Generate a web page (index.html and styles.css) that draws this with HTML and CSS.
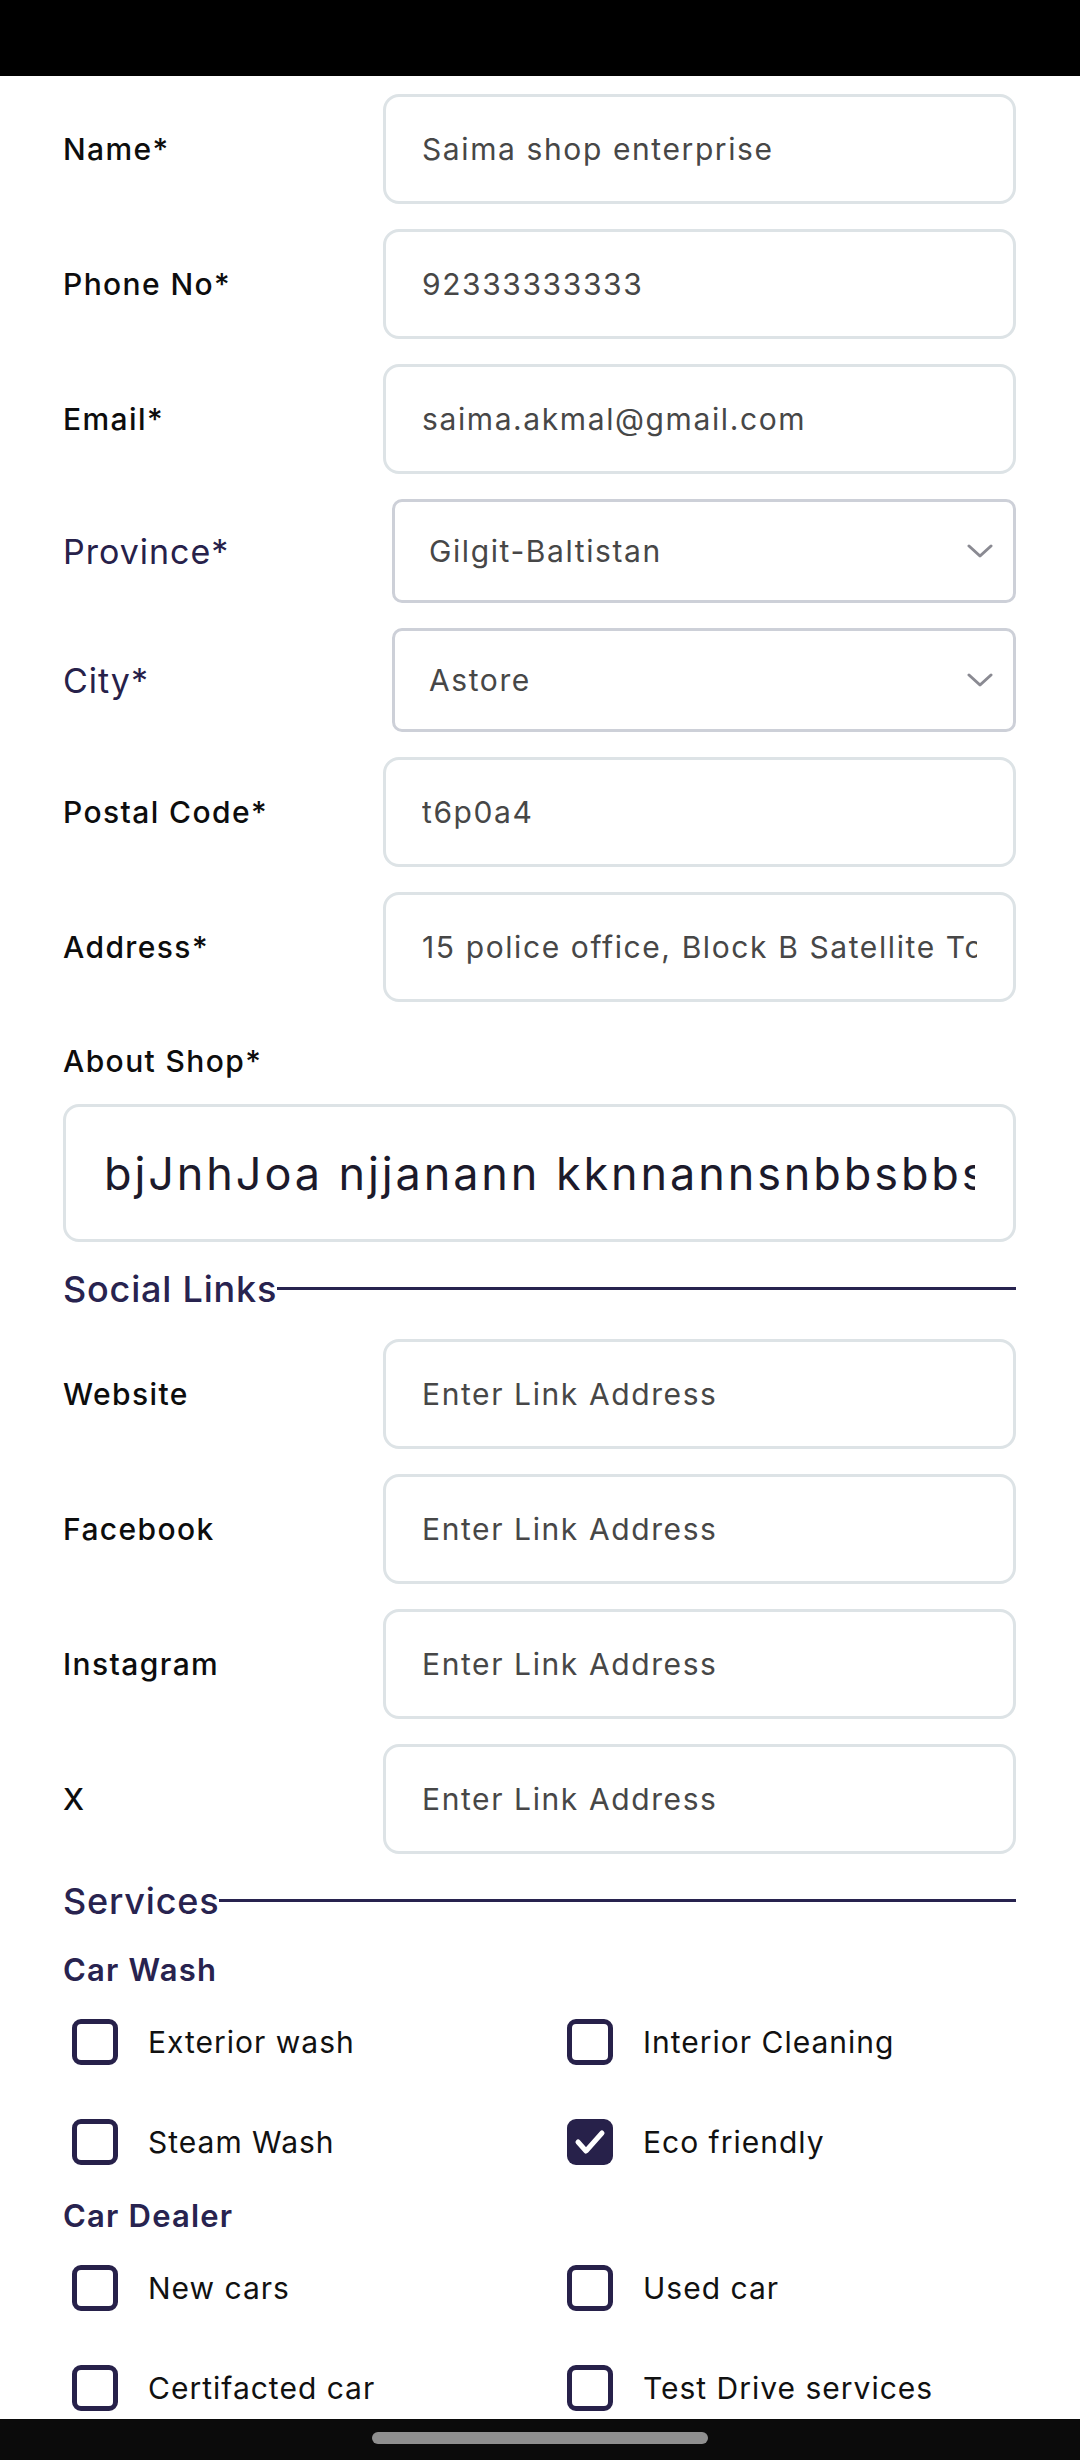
FILE: index.html
```html
<!DOCTYPE html>
<html lang="en">
<head>
<meta charset="utf-8">
<title>Shop Form</title>
<link rel="stylesheet" href="styles.css">
</head>
<body>
<div class="statusbar"></div>
<main class="form">
  <div class="row">
    <label class="label">Name*</label>
    <div class="field"><span class="value">Saima shop enterprise</span></div>
  </div>
  <div class="row">
    <label class="label">Phone No*</label>
    <div class="field"><span class="value">92333333333</span></div>
  </div>
  <div class="row">
    <label class="label">Email*</label>
    <div class="field"><span class="value">saima.akmal@gmail.com</span></div>
  </div>
  <div class="row row-select">
    <label class="label label-accent">Province*</label>
    <div class="select"><span class="value">Gilgit-Baltistan</span>
      <svg class="chev" viewBox="0 0 26 14" width="26" height="14"><path d="M2 2 L13 12 L24 2" fill="none" stroke="#8a8a92" stroke-width="3" stroke-linecap="round" stroke-linejoin="round"/></svg>
    </div>
  </div>
  <div class="row row-select">
    <label class="label label-accent">City*</label>
    <div class="select"><span class="value">Astore</span>
      <svg class="chev" viewBox="0 0 26 14" width="26" height="14"><path d="M2 2 L13 12 L24 2" fill="none" stroke="#8a8a92" stroke-width="3" stroke-linecap="round" stroke-linejoin="round"/></svg>
    </div>
  </div>
  <div class="row">
    <label class="label">Postal Code*</label>
    <div class="field"><span class="value">t6p0a4</span></div>
  </div>
  <div class="row">
    <label class="label">Address*</label>
    <div class="field"><span class="value">15 police office, Block B Satellite Town</span></div>
  </div>

  <div class="about">
    <label class="label">About Shop*</label>
    <div class="textarea"><span class="value big">bjJnhJoa njjanann kknnannsnbbsbbsnnsn</span></div>
  </div>

  <h2 class="section">Social Links<span class="rule"></span></h2>
  <div class="links">
    <div class="row">
      <label class="label">Website</label>
      <div class="field"><span class="value">Enter Link Address</span></div>
    </div>
    <div class="row">
      <label class="label">Facebook</label>
      <div class="field"><span class="value">Enter Link Address</span></div>
    </div>
    <div class="row">
      <label class="label">Instagram</label>
      <div class="field"><span class="value">Enter Link Address</span></div>
    </div>
    <div class="row">
      <label class="label">X</label>
      <div class="field"><span class="value">Enter Link Address</span></div>
    </div>
  </div>

  <h2 class="section section-services">Services<span class="rule"></span></h2>
  <h3 class="group">Car Wash</h3>
  <div class="checks">
    <div class="check"><span class="box"></span><span class="ctext">Exterior wash</span></div>
    <div class="check"><span class="box"></span><span class="ctext">Interior Cleaning</span></div>
    <div class="check"><span class="box"></span><span class="ctext">Steam Wash</span></div>
    <div class="check"><span class="box checked"><svg viewBox="0 0 46 46" width="46" height="46"><path d="M11 23 L19 32 L35 14" fill="none" stroke="#ffffff" stroke-width="5" stroke-linecap="round" stroke-linejoin="round"/></svg></span><span class="ctext">Eco friendly</span></div>
  </div>
  <h3 class="group group-dealer">Car Dealer</h3>
  <div class="checks">
    <div class="check"><span class="box"></span><span class="ctext">New cars</span></div>
    <div class="check"><span class="box"></span><span class="ctext">Used car</span></div>
    <div class="check"><span class="box"></span><span class="ctext">Certifacted car</span></div>
    <div class="check"><span class="box"></span><span class="ctext">Test Drive services</span></div>
  </div>
</main>
<div class="navbar"><span class="pill"></span></div>
</body>
</html>
```
FILE: styles.css
```css
* { box-sizing: border-box; }
html, body {
  margin: 0;
  padding: 0;
  background: #ffffff;
}
body {
  width: 1080px;
  height: 2460px;
  overflow: hidden;
  font-family: "Inter", "Open Sans", sans-serif;
  color: #111;
}
.statusbar {
  height: 76px;
  background: #000;
}
.form {
  padding: 18px 64px 0 63px;
}
.row {
  display: grid;
  grid-template-columns: 320px 1fr;
  align-items: center;
  margin-bottom: 25px;
}
.label {
  font-size: 30px;
  font-weight: 500;
  color: #0d0d0d;
  letter-spacing: 1.4px;
}
.label-accent {
  font-size: 34px;
  font-weight: 400;
  color: #27214a;
  letter-spacing: 1px;
}
.field {
  height: 110px;
  border: 3px solid #dde3e6;
  border-radius: 16px;
  display: flex;
  align-items: center;
  padding: 0 36px;
  overflow: hidden;
}
.value {
  font-size: 30px;
  color: #474747;
  white-space: nowrap;
  overflow: hidden;
  letter-spacing: 1.6px;
}
.row-select {
  grid-template-columns: 329px 1fr;
}
.select {
  height: 104px;
  border: 3px solid #cdd0d8;
  border-radius: 10px;
  display: flex;
  align-items: center;
  justify-content: space-between;
  padding: 0 20px 0 34px;
}
.chev { flex: none; }
.about {
  margin-top: 41px;
}
.about .label {
  display: block;
  line-height: 36px;
  margin-bottom: 25px;
}
.textarea {
  height: 138px;
  border: 3px solid #dde3e6;
  border-radius: 16px;
  display: flex;
  align-items: center;
  padding: 0 38px 0 38px;
  overflow: hidden;
}
.value.big {
  font-size: 45px;
  color: #1c1a2b;
  display: block;
  width: 100%;
  letter-spacing: 2.9px;
}
.section {
  display: flex;
  align-items: center;
  margin: 25px 0 28px;
  font-size: 36px;
  font-weight: 500;
  color: #28234f;
  line-height: 44px;
  letter-spacing: 0.8px;
}
.rule {
  flex: 1;
  height: 3px;
  background: #28234f;
  margin-top: -2px;
}
.section-services {
  margin: 23px 0 27px;
}
.group {
  margin: 0;
  font-size: 31px;
  font-weight: 600;
  color: #28234f;
  line-height: 40px;
  letter-spacing: 1.2px;
}
.group-dealer {
  margin-top: 4px;
}
.checks {
  display: grid;
  grid-template-columns: 495px 1fr;
  grid-auto-rows: 100px;
  align-items: center;
  margin-top: 2px;
}
.check {
  display: flex;
  align-items: center;
  padding-left: 9px;
}
.box {
  width: 46px;
  height: 46px;
  border: 5px solid #27214a;
  border-radius: 9px;
  flex: none;
  margin-right: 30px;
  display: flex;
  align-items: center;
  justify-content: center;
}
.box.checked {
  background: #27214a;
  border: none;
}
.ctext {
  font-size: 30px;
  color: #111;
  letter-spacing: 1px;
}
.navbar {
  position: fixed;
  left: 0;
  bottom: 0;
  width: 1080px;
  height: 41px;
  background: #0b0b0b;
  display: flex;
  justify-content: center;
  padding-top: 13px;
}
.pill {
  width: 336px;
  height: 12px;
  border-radius: 6px;
  background: #8f8f8f;
}
```
